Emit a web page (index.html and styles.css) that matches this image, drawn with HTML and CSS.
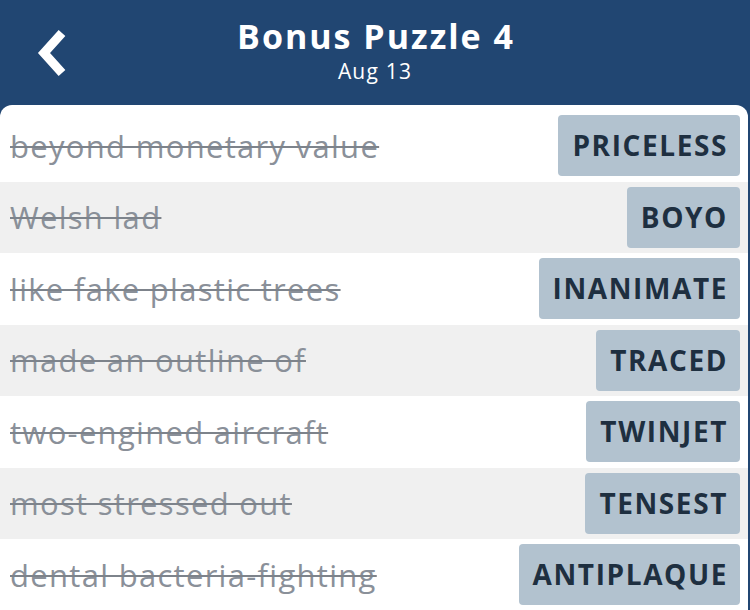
FILE: index.html
```html
<!DOCTYPE html>
<html>
<head>
<meta charset="utf-8">
<link rel="stylesheet" href="styles.css">
</head>
<body>
<div class="app">
  <header class="header">
    <svg class="back" viewBox="0 0 32 50" width="32" height="50"><path d="M25 5 L7 25 L25 45" fill="none" stroke="#fff" stroke-width="9" stroke-linejoin="miter" stroke-linecap="butt"/></svg>
    <div class="title">Bonus Puzzle 4</div>
    <div class="date">Aug 13</div>
  </header>
  <main class="card">
    <div class="row"><span class="clue">beyond monetary value</span><span class="ans">PRICELESS</span></div>
    <div class="row alt"><span class="clue">Welsh lad</span><span class="ans">BOYO</span></div>
    <div class="row"><span class="clue">like fake plastic trees</span><span class="ans">INANIMATE</span></div>
    <div class="row alt"><span class="clue">made an outline of</span><span class="ans">TRACED</span></div>
    <div class="row"><span class="clue">two-engined aircraft</span><span class="ans">TWINJET</span></div>
    <div class="row alt"><span class="clue">most stressed out</span><span class="ans">TENSEST</span></div>
    <div class="row"><span class="clue">dental bacteria-fighting</span><span class="ans">ANTIPLAQUE</span></div>
  </main>
</div>
</body>
</html>
```
FILE: styles.css
```css
html, body {
  margin: 0;
  padding: 0;
  background: #214672;
  font-family: "Open Sans", sans-serif;
  overflow: hidden;
}
.app {
  width: 750px;
  height: 610px;
  display: flex;
  flex-direction: column;
}
.header {
  position: relative;
  height: 105px;
  flex: none;
  display: flex;
  flex-direction: column;
  align-items: center;
  color: #fff;
}
.back {
  position: absolute;
  left: 37px;
  top: 28px;
}
.title {
  margin-top: 14px;
  font-size: 34px;
  font-weight: 700;
  line-height: 44px;
  letter-spacing: 2px;
  padding-left: 2px;
}
.date {
  font-size: 21px;
  line-height: 26px;
  letter-spacing: 1.2px;
}
.card {
  flex: 1;
  background: #fff;
  border-radius: 12px 12px 0 0;
  margin-right: 2px;
  padding-top: 5px;
}
.row {
  height: 71.5px;
  display: flex;
  align-items: center;
  justify-content: space-between;
  padding: 0 8px 0 10px;
}
.row.alt {
  background: #f0f0f0;
}
.clue {
  font-size: 31px;
  color: #8a9099;
  letter-spacing: 1.3px;
  text-decoration: line-through;
  text-decoration-color: #7d838b;
  text-decoration-thickness: 2px;
}
.ans {
  background: #b2c2cf;
  color: #1e2f40;
  font-weight: 700;
  font-size: 28px;
  height: 61px;
  line-height: 61px;
  padding: 0 12px 0 14px;
  letter-spacing: 1.6px;
  border-radius: 4px;
}
```
